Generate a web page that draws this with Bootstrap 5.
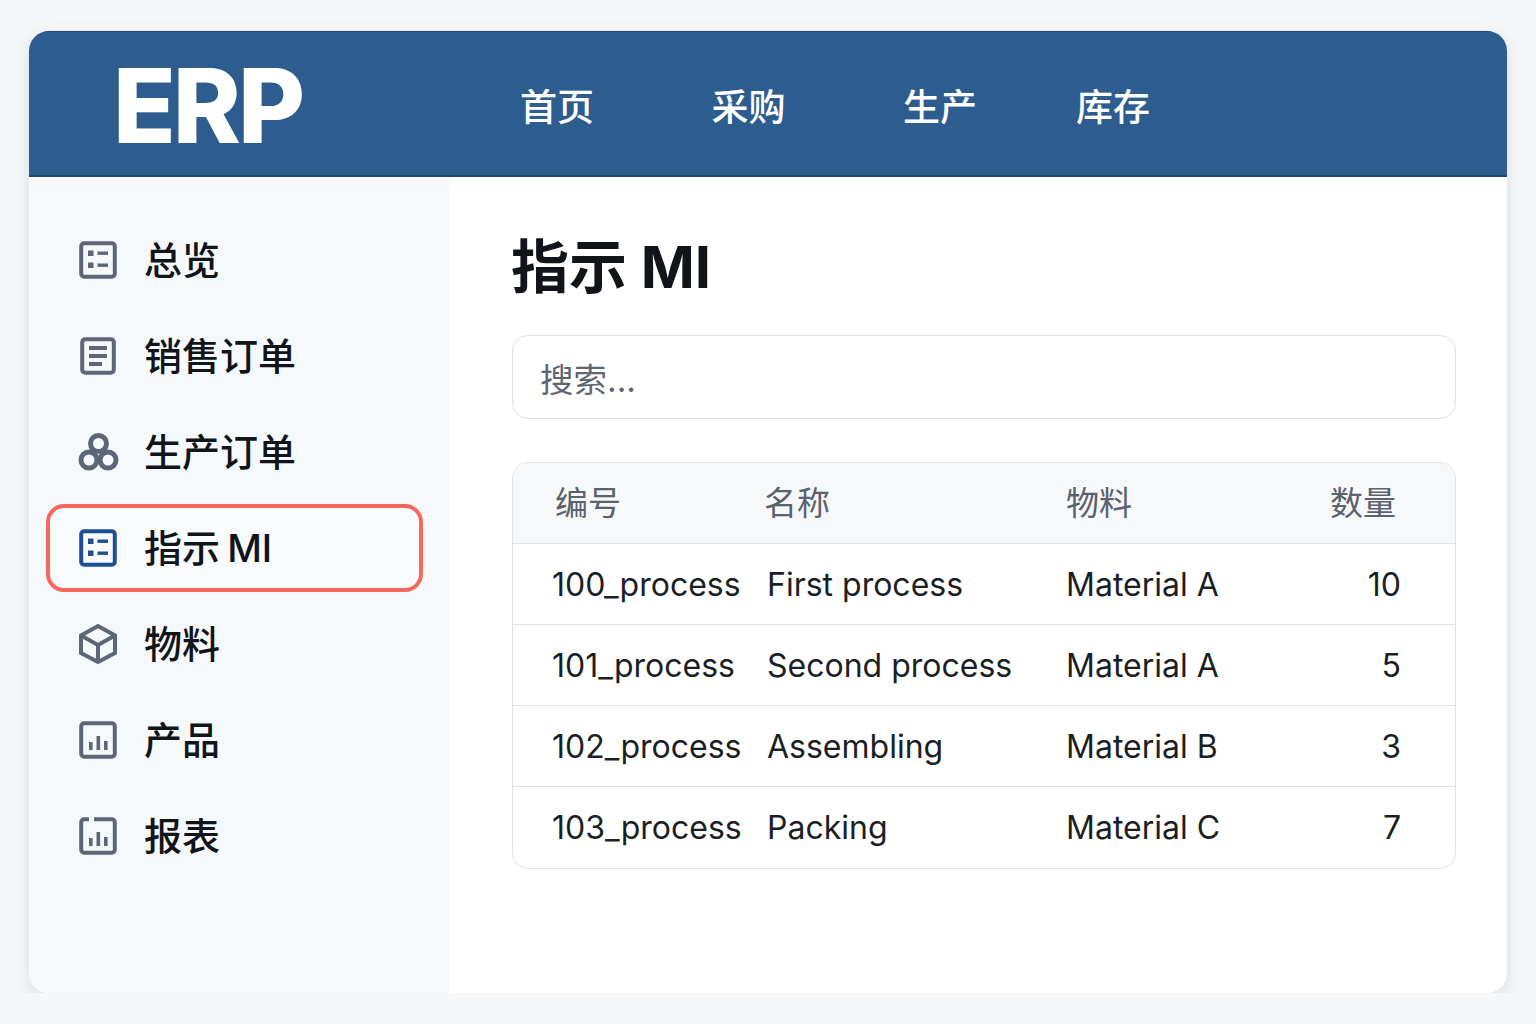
<!DOCTYPE html>
<html lang="zh-CN">
<head>
    <meta charset="UTF-8">
    <meta name="viewport" content="width=device-width, initial-scale=1.0">
    <title>ERP - 指示 MI</title>
    <link href="https://cdn.jsdelivr.net/npm/bootstrap@5.3.3/dist/css/bootstrap.min.css" rel="stylesheet">
    <style>
        body { background: #f5f7f9; font-family: Inter, "Noto Sans CJK SC", sans-serif; color: #111418; }
        .erp-shell { width: 1478px; height: 962px; margin: 31px auto 0; border-radius: 20px; background: #fff; overflow: hidden; box-shadow: 0 5px 18px rgba(40, 55, 75, .13); }
        .erp-top { height: 146px; background: #2d5c8f; border-top: 1px solid #1f4c80; border-bottom: 2px solid #1f4674; padding: 0 0 0 84px; flex-wrap: nowrap; }
        .erp-logo { font-size: 103px; font-weight: 800; line-height: 1; color: #fff; letter-spacing: -3px; padding: 0; margin: 4px 0 0; width: 407px; }
        .erp-logo:hover { color: #fff; }
        .erp-top .nav-link { color: #fff; font-size: 37px; font-weight: 500; line-height: 1.2; padding: 0; margin-top: 10px; }
        .erp-menu { gap: 117.5px; }
        .erp-menu .nav-item:last-child { margin-left: -18.5px; }
        .erp-side { width: 420px; flex: none; background: #f6f9fb; padding: 39px 26px 0 17px; }
        .erp-side .list-group-item { height: 87px; margin-bottom: 9px; padding: 0 0 0 29px; background: transparent; border: 4px solid transparent; border-radius: 18px; color: #111418; font-size: 38px; font-weight: 500; line-height: 1; gap: 27px; }
        .erp-side .list-group-item.active { height: 88px; margin-bottom: 8px; border-width: 4px; border-color: #f8675c; background: #f8fafc; color: #111418; margin-top: 0; word-spacing: -3px; }
        .erp-ico { width: 38px; height: 38px; flex: none; fill: none; stroke: #5d6676; stroke-width: 4; overflow: visible; }
        .erp-ico .dot { fill: #5d6676; stroke: none; }
        .erp-ico .ring { stroke-width: 5; }
        .active .erp-ico { stroke: #1f4f92; }
        .active .erp-ico .dot { fill: #1f4f92; }
        .erp-main { padding: 52px 51px 0 63px; }
        .erp-title { font-size: 58px; font-weight: 700; line-height: 76px; margin: 0 0 30px -1px; color: #111418; }
        .erp-search.form-control { height: 84px; border: 1px solid #dfe3e7; border-radius: 16px; padding: 5px 27px 0; font-size: 33.5px; margin-bottom: 43px; }
        .erp-search::placeholder { color: #5f6670; opacity: 1; }
        .erp-tablebox { border: 1px solid #dfe3e7; border-radius: 16px; overflow: hidden; }
        .erp-table { table-layout: fixed; width: 100%; margin: 0; font-size: 32px; }
        .erp-table th, .erp-table td { height: 81px; padding: 2px 0 0; vertical-align: middle; border-bottom: 1px solid #dfe3e7; color: #1b1f24; }
        .erp-table tr:last-child td { height: 82px; border-bottom: 0; }
        .erp-table thead th { height: 80px; background: #f6f8fa; color: #5a626c; font-weight: 400; font-size: 33px; }
        .erp-table .c-id { width: 254px; padding-left: 39px; }
        .erp-table .c-name { width: 299px; }
        .erp-table .c-mat { width: 260px; }
        .erp-table .c-qty { padding-right: 54px; text-align: right; }
        .erp-table thead .c-id { padding-left: 42px; }
        .erp-table thead .c-name { text-indent: -3px; }
        .erp-table thead .c-qty { padding-right: 59px; }
    </style>
</head>
<body>
    <div class="erp-shell d-flex flex-column">
        <nav class="navbar erp-top justify-content-start">
            <a class="navbar-brand erp-logo" href="#">ERP</a>
            <ul class="nav erp-menu flex-nowrap">
                <li class="nav-item"><a class="nav-link" href="#">首页</a></li>
                <li class="nav-item"><a class="nav-link" href="#">采购</a></li>
                <li class="nav-item"><a class="nav-link" href="#">生产</a></li>
                <li class="nav-item"><a class="nav-link" href="#">库存</a></li>
            </ul>
        </nav>
        <div class="d-flex flex-grow-1">
            <aside class="erp-side">
                <div class="list-group">
                    <a href="#" class="list-group-item d-flex align-items-center">
                        <svg class="erp-ico" viewBox="0 0 38 38"><rect x="2.2" y="2.2" width="33.6" height="33.6" rx="3"/><rect class="dot" x="9" y="9.5" width="5.5" height="5.5"/><rect class="dot" x="9" y="21.5" width="5.5" height="5.5"/><rect class="dot" x="18.5" y="10.5" width="10.5" height="3.4"/><rect class="dot" x="18.5" y="22.5" width="10.5" height="3.4"/></svg>
                        总览
                    </a>
                    <a href="#" class="list-group-item d-flex align-items-center">
                        <svg class="erp-ico" viewBox="0 0 38 38"><rect x="3.2" y="2.2" width="31.6" height="33.6" rx="3"/><path d="M10 11h18M10 19h18M10 27h13"/></svg>
                        销售订单
                    </a>
                    <a href="#" class="list-group-item d-flex align-items-center">
                        <svg class="erp-ico" viewBox="0 0 38 38"><circle class="ring" cx="19.5" cy="10.5" r="8"/><circle class="ring" cx="10" cy="27" r="8"/><circle class="ring" cx="29" cy="27" r="8"/></svg>
                        生产订单
                    </a>
                    <a href="#" class="list-group-item active d-flex align-items-center">
                        <svg class="erp-ico" viewBox="0 0 38 38"><rect x="2.2" y="2.2" width="33.6" height="33.6" rx="3"/><rect class="dot" x="9" y="9.5" width="5.5" height="5.5"/><rect class="dot" x="9" y="21.5" width="5.5" height="5.5"/><rect class="dot" x="18.5" y="10.5" width="10.5" height="3.4"/><rect class="dot" x="18.5" y="22.5" width="10.5" height="3.4"/></svg>
                        指示 MI
                    </a>
                    <a href="#" class="list-group-item d-flex align-items-center">
                        <svg class="erp-ico" viewBox="0 0 38 38"><path d="M19 1 36 10.5V28L19 37 2 28V10.5Z"/><path d="M2 10.5 19 20 36 10.5M19 20V37"/></svg>
                        物料
                    </a>
                    <a href="#" class="list-group-item d-flex align-items-center">
                        <svg class="erp-ico" viewBox="0 0 38 38"><rect x="2.2" y="2.2" width="33.6" height="33.6" rx="3"/><rect class="dot" x="10" y="21" width="3.6" height="8"/><rect class="dot" x="17.5" y="15" width="3.6" height="14"/><rect class="dot" x="25" y="20" width="3.6" height="9"/></svg>
                        产品
                    </a>
                    <a href="#" class="list-group-item d-flex align-items-center">
                        <svg class="erp-ico" viewBox="0 0 38 38"><path d="M10 2.2H5.2a3 3 0 0 0-3 3v27.6a3 3 0 0 0 3 3h27.6a3 3 0 0 0 3-3V5.2a3 3 0 0 0-3-3H15"/><rect class="dot" x="10" y="21" width="3.6" height="8"/><rect class="dot" x="17.5" y="15" width="3.6" height="14"/><rect class="dot" x="25" y="20" width="3.6" height="9"/></svg>
                        报表
                    </a>
                </div>
            </aside>
            <main class="erp-main flex-grow-1">
                <h1 class="erp-title">指示 MI</h1>
                <input type="text" class="form-control erp-search" placeholder="搜索...">
                <div class="erp-tablebox">
                    <table class="table erp-table">
                        <thead>
                            <tr><th class="c-id">编号</th><th class="c-name">名称</th><th class="c-mat">物料</th><th class="c-qty">数量</th></tr>
                        </thead>
                        <tbody>
                            <tr><td class="c-id">100_process</td><td class="c-name">First process</td><td class="c-mat">Material A</td><td class="c-qty">10</td></tr>
                            <tr><td class="c-id">101_process</td><td class="c-name">Second process</td><td class="c-mat">Material A</td><td class="c-qty">5</td></tr>
                            <tr><td class="c-id">102_process</td><td class="c-name">Assembling</td><td class="c-mat">Material B</td><td class="c-qty">3</td></tr>
                            <tr><td class="c-id">103_process</td><td class="c-name">Packing</td><td class="c-mat">Material C</td><td class="c-qty">7</td></tr>
                        </tbody>
                    </table>
                </div>
            </main>
        </div>
    </div>
    <script src="https://cdn.jsdelivr.net/npm/bootstrap@5.3.3/dist/js/bootstrap.bundle.min.js"></script>
</body>
</html>
